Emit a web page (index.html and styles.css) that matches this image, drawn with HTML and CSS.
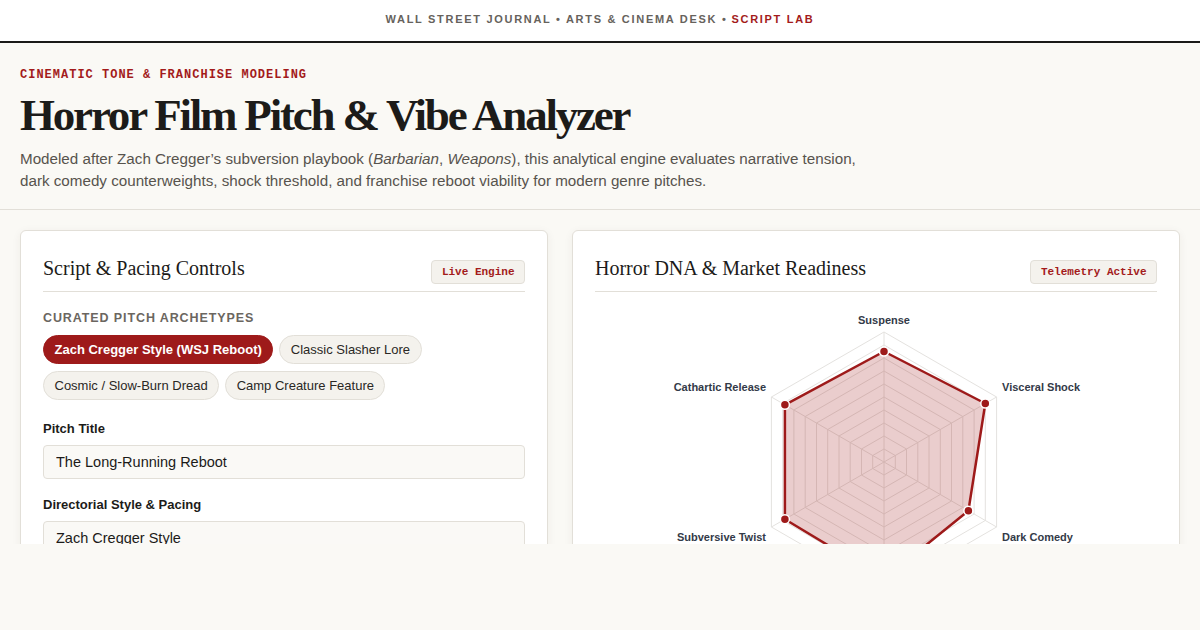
FILE: index.html
```html
<!DOCTYPE html>
<html lang="en">
<head>
  <meta charset="UTF-8" />
  <title>Horror Film Pitch &amp; Vibe Analyzer</title>
  <link rel="stylesheet" href="styles.css">
</head>
<body>

  <div class="topbar">
    WALL STREET JOURNAL &bull; ARTS &amp; CINEMA DESK &bull; <span class="rojo">SCRIPT LAB</span>
  </div>

  <header class="cabecera">
    <div class="eyebrow">CINEMATIC TONE &amp; FRANCHISE MODELING</div>
    <h1>Horror Film Pitch &amp; Vibe Analyzer</h1>
    <p class="intro">Modeled after Zach Cregger’s subversion playbook (<em>Barbarian</em>, <em>Weapons</em>), this analytical engine evaluates narrative tension, dark comedy counterweights, shock threshold, and franchise reboot viability for modern genre pitches.</p>
  </header>

  <main class="workspace">
    <section class="card">
      <div class="card-head">
        <h2>Script &amp; Pacing Controls</h2>
        <span class="badge">Live Engine</span>
      </div>

      <div class="seccion">CURATED PITCH ARCHETYPES</div>
      <div class="chips">
        <button class="chip activo">Zach Cregger Style (WSJ Reboot)</button>
        <button class="chip">Classic Slasher Lore</button>
        <button class="chip">Cosmic / Slow-Burn Dread</button>
        <button class="chip">Camp Creature Feature</button>
      </div>

      <label class="campo">
        <span>Pitch Title</span>
        <input type="text" value="The Long-Running Reboot" />
      </label>

      <label class="campo">
        <span>Directorial Style &amp; Pacing</span>
        <input type="text" value="Zach Cregger Style" />
      </label>
    </section>

    <section class="card">
      <div class="card-head">
        <h2>Horror DNA &amp; Market Readiness</h2>
        <span class="badge">Telemetry Active</span>
      </div>
      <svg class="radar" id="radar" width="562" height="330" viewBox="0 0 562 330"></svg>
    </section>
  </main>

  <script>
    const radar = document.getElementById("radar");
    const cx = 289, cy = 158, R = 130;

    const ejes = [
      { nombre: "Suspense", valor: 85 },
      { nombre: "Visceral Shock", valor: 90 },
      { nombre: "Dark Comedy", valor: 75 },
      { nombre: "Franchise Reboot", valor: 90 },
      { nombre: "Subversive Twist", valor: 88 },
      { nombre: "Cathartic Release", valor: 88 }
    ];

    function punto(i, r) {
      const ang = -Math.PI / 2 + i * Math.PI / 3;
      return [cx + r * Math.cos(ang), cy + r * Math.sin(ang)];
    }

    let svg = "";

    // rejilla: 10 anillos + radios
    for (let n = 1; n <= 10; n++) {
      const r = R * n / 10;
      const pts = ejes.map((e, i) => punto(i, r).map(v => v.toFixed(1)).join(",")).join(" ");
      svg += `<polygon points="${pts}" fill="none" stroke="#e4e2df" stroke-width="1"/>`;
    }
    ejes.forEach((e, i) => {
      const [x, y] = punto(i, R);
      svg += `<line x1="${cx}" y1="${cy}" x2="${x.toFixed(1)}" y2="${y.toFixed(1)}" stroke="#e4e2df" stroke-width="1"/>`;
    });

    // datos
    const datos = ejes.map((e, i) => punto(i, R * e.valor / 100));
    svg += `<polygon points="${datos.map(p => p.map(v => v.toFixed(1)).join(",")).join(" ")}" fill="rgba(158,26,26,0.22)" stroke="#9e1a1a" stroke-width="2.5" stroke-linejoin="round"/>`;
    datos.forEach(([x, y]) => {
      svg += `<circle cx="${x.toFixed(1)}" cy="${y.toFixed(1)}" r="4.5" fill="#9e1a1a" stroke="#fff" stroke-width="1.5"/>`;
    });

    // etiquetas
    const etiquetas = [
      { x: cx, y: 20, a: "middle" },
      { x: cx + 118, y: 87, a: "start" },
      { x: cx + 118, y: 237, a: "start" },
      { x: cx, y: 312, a: "middle" },
      { x: cx - 118, y: 237, a: "end" },
      { x: cx - 118, y: 87, a: "end" }
    ];
    ejes.forEach((e, i) => {
      const t = etiquetas[i];
      svg += `<text x="${t.x}" y="${t.y}" text-anchor="${t.a}" class="eje">${e.nombre}</text>`;
    });

    radar.innerHTML = svg;
  </script>
</body>
</html>
```

FILE: styles.css
```css
* { box-sizing: border-box; margin: 0; padding: 0; }

body {
  background: #faf9f5;
  font-family: "Liberation Sans", Arial, sans-serif;
  color: #1c1b19;
}

.topbar {
  background: #fff;
  height: 43px;
  border-bottom: 2px solid #1a1a18;
  display: flex;
  justify-content: center;
  align-items: center;
  gap: 4px;
  font-size: 11px;
  font-weight: bold;
  letter-spacing: 1.7px;
  color: #66625c;
  padding-bottom: 3px;
}

.rojo { color: #a31b1b; }

.cabecera {
  padding: 25px 20px 17px;
  border-bottom: 1px solid #e2dfd8;
}

.eyebrow {
  font-family: "Liberation Mono", monospace;
  font-size: 12px;
  font-weight: bold;
  letter-spacing: 1px;
  color: #a31b1b;
}

h1 {
  font-family: "Liberation Serif", "Times New Roman", serif;
  font-size: 45px;
  font-weight: bold;
  letter-spacing: -2.2px;
  line-height: 1;
  margin: 11px 0 10px;
  color: #1c1b19;
}

.intro {
  font-size: 15.2px;
  line-height: 22px;
  color: #57534d;
  max-width: 860px;
}

.workspace {
  display: grid;
  grid-template-columns: 528px 1fr;
  gap: 24px;
  padding: 20px 20px 0;
  height: 334px;
  overflow: hidden;
}

.card {
  background: #fff;
  border: 1px solid #e2dfd8;
  border-radius: 6px;
  padding: 20px 22px 20px;
  box-shadow: 0 2px 10px rgba(60, 50, 30, 0.06);
  height: 420px;
}

.card-head {
  display: flex;
  justify-content: space-between;
  align-items: flex-end;
  padding: 3px 0 7px;
  border-bottom: 1px solid #e2dfd8;
}

h2 {
  font-family: "Liberation Serif", "Times New Roman", serif;
  font-size: 20px;
  font-weight: normal;
  color: #1c1b19;
  line-height: 28px;
  margin-bottom: 2px;
}

.badge {
  font-family: "Liberation Mono", monospace;
  font-size: 11px;
  font-weight: bold;
  color: #a31b1b;
  background: #f4f2ed;
  border: 1px solid #e2dfd8;
  border-radius: 4px;
  padding: 5px 9.5px 4px;
  line-height: 13px;
}

.seccion {
  margin-top: 19px;
  font-size: 12.5px;
  font-weight: bold;
  letter-spacing: 0.9px;
  color: #6b665f;
}

.chips {
  display: flex;
  flex-wrap: wrap;
  gap: 7px 6px;
  margin-top: 10px;
}

.chip {
  font-family: "Liberation Sans", Arial, sans-serif;
  font-size: 13px;
  color: #2a2825;
  background: #f4f2ed;
  border: 1px solid #e2dfd8;
  border-radius: 15px;
  padding: 0 10.5px;
  height: 29px;
  cursor: pointer;
}

.chip.activo {
  background: #9e1a1a;
  border-color: #9e1a1a;
  color: #fff;
  font-weight: bold;
}

.campo {
  display: block;
  margin-top: 21px;
}

.campo + .campo { margin-top: 18px; }

.campo span {
  display: block;
  font-size: 13px;
  font-weight: bold;
  color: #1c1b19;
  margin-bottom: 9px;
}

.campo input {
  width: 100%;
  height: 34px;
  font-family: "Liberation Sans", Arial, sans-serif;
  font-size: 14.5px;
  color: #1c1b19;
  background: #faf9f6;
  border: 1px solid #e2dfd8;
  border-radius: 4px;
  padding: 0 12px;
}

.radar {
  display: block;
  margin-top: 12px;
}

.eje {
  font-family: "Liberation Sans", Arial, sans-serif;
  font-size: 11px;
  font-weight: bold;
  fill: #333a48;
}
```
